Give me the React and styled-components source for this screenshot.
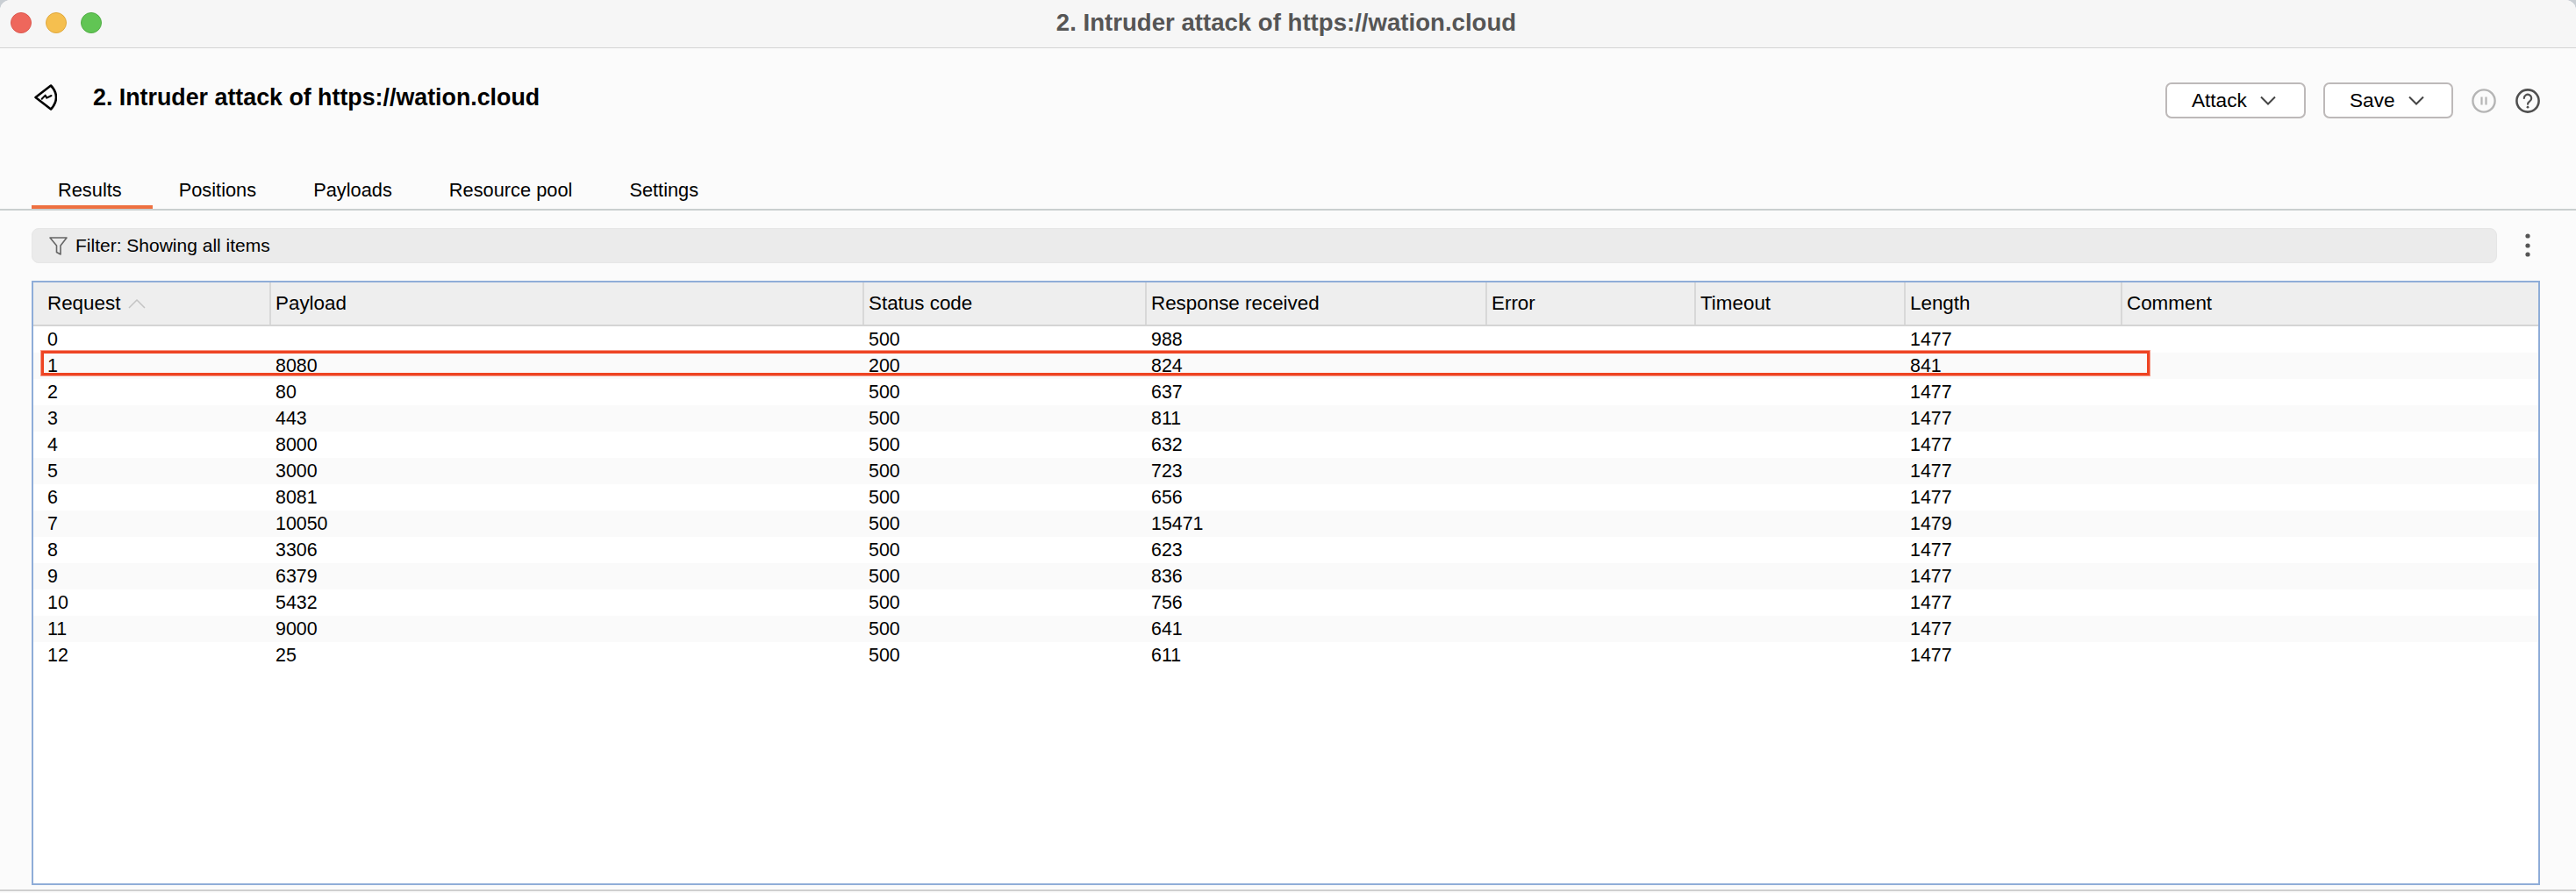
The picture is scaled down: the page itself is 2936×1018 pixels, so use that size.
import React from "react";
import styled, { createGlobalStyle } from "styled-components";

const GlobalStyle = createGlobalStyle`
  html, body {
    margin: 0;
    padding: 0;
    background: #c9ced3;
  }
  * { box-sizing: border-box; }
`;

const Window = styled.div`
  width: 2936px;
  height: 1018px;
  overflow: hidden;
  display: flex;
  flex-direction: column;
  background: #fbfbfb;
  border-radius: 12px 12px 0 0;
  font-family: "Liberation Sans", Arial, sans-serif;
  color: #000;
`;

const TitleBar = styled.div`
  position: relative;
  flex: none;
  height: 55px;
  display: flex;
  align-items: center;
  justify-content: center;
  padding-right: 4px;
  background: #f6f6f6;
  border-bottom: 1px solid #d4d4d4;
`;

const Lights = styled.div`
  position: absolute;
  left: 12px;
  top: 14px;
  display: flex;
  gap: 16px;
`;

const Light = styled.span`
  width: 24px;
  height: 24px;
  border-radius: 50%;
  background: ${(p) => p.$color};
  border: 1px solid ${(p) => p.$edge};
`;

const WindowTitle = styled.div`
  font-size: 27.6px;
  font-weight: 700;
  color: #555;
  margin-top: -2px;
`;

const Header = styled.div`
  flex: none;
  height: 143px;
  display: flex;
  align-items: flex-start;
  padding: 39px 41px 0 39px;
`;

const AttackTitle = styled.h1`
  margin: 0 0 0 41px;
  font-size: 26.8px;
  line-height: 34px;
  font-weight: 700;
`;

const BackIcon = styled.svg`
  width: 26px;
  height: 30px;
  margin-top: 2px;
  flex: none;
`;

const Actions = styled.div`
  margin-left: auto;
  display: flex;
  align-items: center;
`;

const MenuButton = styled.button`
  width: ${(p) => p.$width}px;
  height: 41px;
  margin-right: 20px;
  display: flex;
  align-items: center;
  gap: 15px;
  background: #fff;
  border: 2px solid #bdb9b9;
  border-radius: 7px;
  font: 22.6px "Liberation Sans", Arial, sans-serif;
  color: #000;
  padding: 0 0 0 28px;
`;

const Chevron = styled.svg`
  width: 18px;
  height: 11px;
  flex: none;
`;

const RoundIcon = styled.svg`
  width: 28px;
  height: 28px;
  margin-left: ${(p) => p.$gap}px;
  flex: none;
`;

const Tabs = styled.nav`
  flex: none;
  height: 42px;
  display: flex;
  padding-left: 36px;
  border-bottom: 2px solid #c9cfcf;
`;

const Tab = styled.div`
  height: 40px;
  padding: 6px 35px 0 30px;
  font-size: 21.8px;
  line-height: 26px;
  border-bottom: 4px solid ${(p) => (p.$active ? "#ee7040" : "transparent")};
`;

const Content = styled.div`
  flex: 1;
  display: flex;
  flex-direction: column;
  padding: 20px 41px 5px 36px;
  border-bottom: 2px solid #cfcfcf;
  margin-bottom: 2px;
`;

const FilterRow = styled.div`
  flex: none;
  display: flex;
  align-items: center;
  height: 40px;
`;

const FilterBar = styled.div`
  width: 2810px;
  height: 40px;
  display: flex;
  align-items: center;
  gap: 9px;
  padding-left: 19px;
  background: #ebebeb;
  border: 1px solid #e6e6e6;
  border-radius: 8px;
  font-size: 21px;
`;

const Dots = styled.svg`
  width: 8px;
  height: 30px;
  margin-left: 31px;
  flex: none;
`;

const TableFrame = styled.div`
  position: relative;
  flex: 1;
  margin-top: 20px;
  background: #fff;
  border: 2px solid #8fadd8;
`;

const columns = "269px 676px 322px 388px 238px 239px 247px 1fr";

const HeadRow = styled.div`
  display: grid;
  grid-template-columns: ${columns};
  height: 50px;
  background: #eeeeee;
  border-bottom: 2px solid #d4d4d4;
`;

const HeadCell = styled.div`
  display: flex;
  align-items: center;
  gap: 9px;
  padding-left: ${(p) => (p.$first ? 16 : 5)}px;
  border-left: ${(p) => (p.$first ? "none" : "2px solid #d8d8d8")};
  font-size: 22.4px;
`;

const Row = styled.div`
  display: grid;
  grid-template-columns: ${columns};
  height: 30px;
  background: ${(p) => (p.$odd ? "#fafafa" : "#fff")};
`;

const Cell = styled.div`
  padding-left: ${(p) => (p.$first ? 16 : 7)}px;
  font-size: 21.4px;
  line-height: 30px;
`;

const Highlight = styled.div`
  position: absolute;
  left: 9px;
  top: 78px;
  width: 2403px;
  height: 28px;
  border: 3px solid #ee4423;
  box-shadow: 0 0 0 1px rgba(238, 68, 35, 0.55);
`;

const heads = ["Request", "Payload", "Status code", "Response received", "Error", "Timeout", "Length", "Comment"];

const rows = [
  ["0", "", "500", "988", "1477"],
  ["1", "8080", "200", "824", "841"],
  ["2", "80", "500", "637", "1477"],
  ["3", "443", "500", "811", "1477"],
  ["4", "8000", "500", "632", "1477"],
  ["5", "3000", "500", "723", "1477"],
  ["6", "8081", "500", "656", "1477"],
  ["7", "10050", "500", "15471", "1479"],
  ["8", "3306", "500", "623", "1477"],
  ["9", "6379", "500", "836", "1477"],
  ["10", "5432", "500", "756", "1477"],
  ["11", "9000", "500", "641", "1477"],
  ["12", "25", "500", "611", "1477"],
];

const tabs = ["Results", "Positions", "Payloads", "Resource pool", "Settings"];

const title = "2. Intruder attack of https://wation.cloud";

const MenuChevron = () => (
  <Chevron viewBox="0 0 18 11" fill="none" stroke="#444" strokeWidth="2">
    <path d="M1 1.5 L9 9.5 L17 1.5" />
  </Chevron>
);

export default function App() {
  return (
    <Window>
      <GlobalStyle />
      <TitleBar>
        <Lights>
          <Light $color="#ee675c" $edge="#dc5a50" />
          <Light $color="#f5bf4f" $edge="#e0a93e" />
          <Light $color="#61c554" $edge="#52ad46" />
        </Lights>
        <WindowTitle>{title}</WindowTitle>
      </TitleBar>

      <Header>
        <BackIcon viewBox="0 0 26 30" fill="none" stroke="#000" strokeWidth="2.6" strokeLinejoin="round" strokeLinecap="round">
          <path d="M1.5 15 L19 1.5 Q25 8 25 15 Q25 22 19 28.5 Z" />
          <path d="M8.7 16.7 L12.7 12.6 L14.3 15.7 L19.5 13" strokeWidth="2" />
        </BackIcon>
        <AttackTitle>{title}</AttackTitle>
        <Actions>
          <MenuButton $width={160}>
            Attack <MenuChevron />
          </MenuButton>
          <MenuButton $width={148}>
            Save <MenuChevron />
          </MenuButton>
          <RoundIcon $gap={1} viewBox="0 0 28 28" fill="none">
            <circle cx="14" cy="14" r="12.6" stroke="#b5b5b5" strokeWidth="2.4" />
            <path d="M11.5 9.5v9M16.5 9.5v9" stroke="#b5b5b5" strokeWidth="2.2" />
          </RoundIcon>
          <RoundIcon $gap={22} viewBox="0 0 28 28" fill="none">
            <circle cx="14" cy="14" r="12.6" stroke="#505050" strokeWidth="2.6" />
            <path d="M9.8 11 a4.2 4.2 0 1 1 6.5 3.4 c-1.5 1-2.3 1.7-2.3 3.3" stroke="#505050" strokeWidth="2.2" strokeLinecap="round" />
            <circle cx="14" cy="21.2" r="1.4" fill="#505050" />
          </RoundIcon>
        </Actions>
      </Header>

      <Tabs>
        {tabs.map((t, i) => (
          <Tab key={t} $active={i === 0}>{t}</Tab>
        ))}
      </Tabs>

      <Content>
        <FilterRow>
          <FilterBar>
            <svg width="21" height="21" viewBox="0 0 21 21" fill="none" stroke="#666" strokeWidth="1.6" strokeLinejoin="round">
              <path d="M1 1 H20 L13 10 V20 L8.5 17.5 V10 Z" />
            </svg>
            Filter: Showing all items
          </FilterBar>
          <Dots viewBox="0 0 8 30" fill="#555">
            <circle cx="4" cy="4" r="2.6" />
            <circle cx="4" cy="15" r="2.6" />
            <circle cx="4" cy="25" r="2.6" />
          </Dots>
        </FilterRow>

        <TableFrame>
          <HeadRow>
            {heads.map((h, i) => (
              <HeadCell key={h} $first={i === 0}>
                {h}
                {i === 0 && (
                  <svg width="20" height="11" viewBox="0 0 20 11" fill="none" stroke="#c4c4c4" strokeWidth="1.5">
                    <path d="M1 10 L10 1 L19 10" />
                  </svg>
                )}
              </HeadCell>
            ))}
          </HeadRow>
          {rows.map((r, i) => (
            <Row key={r[0]} $odd={i % 2 === 1}>
              <Cell $first>{r[0]}</Cell>
              <Cell>{r[1]}</Cell>
              <Cell>{r[2]}</Cell>
              <Cell>{r[3]}</Cell>
              <Cell />
              <Cell />
              <Cell>{r[4]}</Cell>
              <Cell />
            </Row>
          ))}
          <Highlight />
        </TableFrame>
      </Content>
    </Window>
  );
}
